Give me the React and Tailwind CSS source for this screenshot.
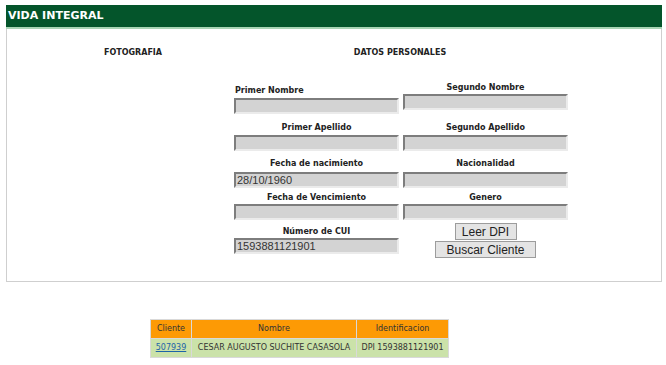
import React from 'react';

const verdana = { fontFamily: '"DejaVu Sans", Verdana, sans-serif' };

function Campo({ value = '' }) {
  return (
    <div className="h-[16px] w-[165px] bg-[#d3d3d3] border-2 border-t-[#7d7d7d] border-l-[#7d7d7d] border-r-[#ebebeb] border-b-[#ebebeb] flex items-center pl-[1px] text-[11px] leading-none text-[#333] font-['Liberation_Sans',Arial,sans-serif]">
      {value}
    </div>
  );
}

function Etiqueta({ children, left }) {
  return (
    <div className={`h-[10px] leading-[10px] text-[8px] font-bold text-[#222] ${left ? 'text-left pl-[1px]' : 'text-center'}`}>
      {children}
    </div>
  );
}

function Boton({ children, className }) {
  return (
    <button className={`h-[17px] border border-[#9c9c9c] bg-[#e4e4e4] text-[12px] leading-none text-[#222] font-['Liberation_Sans',Arial,sans-serif] ${className}`}>
      {children}
    </button>
  );
}

export default function App() {
  return (
    <div className="w-[666px] h-[365px] bg-white pt-[5px] px-[6px] overflow-hidden" style={verdana}>
      <div className="w-[656px]">
        {/* Encabezado */}
        <div className="h-[24px] bg-[#04552b] border-b-2 border-[#a9d5b5] flex items-center px-[2px] text-white text-[11px] font-bold">
          VIDA INTEGRAL
        </div>

        {/* Panel */}
        <div className="h-[253px] border border-t-0 border-[#cfcfcf]">
          <div className="flex pt-[19px]">
            <div className="w-[252px] text-center text-[8px] leading-[10px] font-bold text-[#222]">FOTOGRAFIA</div>
            <div className="w-[282px] text-center text-[8px] leading-[10px] font-bold text-[#222]">DATOS PERSONALES</div>
          </div>

          <div className="ml-[227px] mt-[25px] w-[334px]">
            {/* fila 1 */}
            <div className="flex gap-[4px]">
              <div className="w-[165px] pt-[3px]">
                <Etiqueta left>Primer Nombre</Etiqueta>
                <div className="mt-[2px]"><Campo /></div>
              </div>
              <div className="w-[165px]">
                <Etiqueta>Segundo Nombre</Etiqueta>
                <div className="mt-[1px]"><Campo /></div>
              </div>
            </div>
            {/* fila 2 */}
            <div className="flex gap-[4px] mt-[9px]">
              <div className="w-[165px]">
                <Etiqueta>Primer Apellido</Etiqueta>
                <div className="mt-[2px]"><Campo /></div>
              </div>
              <div className="w-[165px]">
                <Etiqueta>Segundo Apellido</Etiqueta>
                <div className="mt-[2px]"><Campo /></div>
              </div>
            </div>
            {/* fila 3 */}
            <div className="flex gap-[4px] mt-[8px]">
              <div className="w-[165px]">
                <Etiqueta>Fecha de nacimiento</Etiqueta>
                <div className="mt-[3px]"><Campo value="28/10/1960" /></div>
              </div>
              <div className="w-[165px]">
                <Etiqueta>Nacionalidad</Etiqueta>
                <div className="mt-[3px]"><Campo /></div>
              </div>
            </div>
            {/* fila 4 */}
            <div className="flex gap-[4px] mt-[5px]">
              <div className="w-[165px]">
                <Etiqueta>Fecha de Vencimiento</Etiqueta>
                <div className="mt-[1px]"><Campo /></div>
              </div>
              <div className="w-[165px]">
                <Etiqueta>Genero</Etiqueta>
                <div className="mt-[1px]"><Campo /></div>
              </div>
            </div>
            {/* fila 5 */}
            <div className="flex gap-[4px] mt-[3px]">
              <div className="w-[165px] pt-[4px]">
                <Etiqueta>Número de CUI</Etiqueta>
                <div className="mt-[1px]"><Campo value="1593881121901" /></div>
              </div>
              <div className="w-[165px] flex flex-col items-center">
                <Boton className="w-[62px]">Leer DPI</Boton>
                <Boton className="w-[101px] mt-[1px]">Buscar Cliente</Boton>
              </div>
            </div>
          </div>
        </div>

        {/* Resultados */}
        <table className="ml-[144px] mt-[37px] border-collapse text-[8px] text-[#333]">
          <thead>
            <tr className="bg-[#fd9a05] h-[19px]">
              <th className="w-[41px] border border-[#d9d9d9] font-normal text-center">Cliente</th>
              <th className="w-[165px] border border-[#d9d9d9] font-normal text-center">Nombre</th>
              <th className="w-[92px] border border-[#d9d9d9] font-normal text-center">Identificacion</th>
            </tr>
          </thead>
          <tbody>
            <tr className="bg-[#cbe2a9] h-[19px]">
              <td className="border border-[#d9d9d9] text-center">
                <a href="#" className="text-[#1d64a8] underline">507939</a>
              </td>
              <td className="border border-[#d9d9d9] text-center whitespace-nowrap">CESAR AUGUSTO SUCHITE CASASOLA</td>
              <td className="border border-[#d9d9d9] text-center whitespace-nowrap">DPI 1593881121901</td>
            </tr>
          </tbody>
        </table>
      </div>
    </div>
  );
}
